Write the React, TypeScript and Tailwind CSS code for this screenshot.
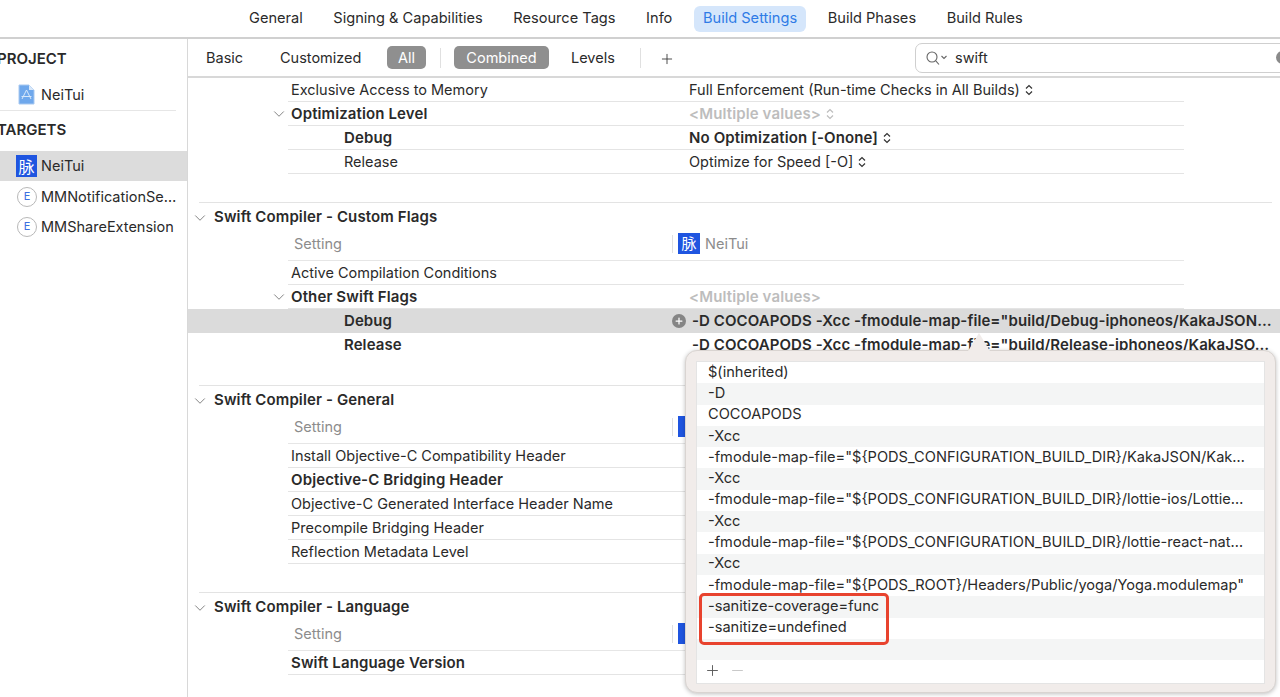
import React from 'react';
import { ChevronDown, Plus, Minus } from 'lucide-react';

const tabs = ['General', 'Signing & Capabilities', 'Resource Tags', 'Info', 'Build Settings', 'Build Phases', 'Build Rules'];

const flagItems = [
  '$(inherited)',
  '-D',
  'COCOAPODS',
  '-Xcc',
  '-fmodule-map-file="${PODS_CONFIGURATION_BUILD_DIR}/KakaJSON/Kak…',
  '-Xcc',
  '-fmodule-map-file="${PODS_CONFIGURATION_BUILD_DIR}/lottie-ios/Lottie…',
  '-Xcc',
  '-fmodule-map-file="${PODS_CONFIGURATION_BUILD_DIR}/lottie-react-nat…',
  '-Xcc',
  '-fmodule-map-file="${PODS_ROOT}/Headers/Public/yoga/Yoga.modulemap"',
  '-sanitize-coverage=func',
  '-sanitize=undefined',
  '',
];

const Stepper = ({ light = false }: { light?: boolean }) => (
  <svg width="8" height="12" viewBox="0 0 8 12" fill="none" stroke={light ? '#bdbdbd' : '#333'} strokeWidth="1.2" className="ml-[5px] shrink-0">
    <path d="M1 4.5 4 1.5 7 4.5M1 7.5 4 10.5 7 7.5" />
  </svg>
);

const AppIcon = ({ className }: { className: string }) => (
  <div className={`flex items-center justify-center bg-[#1f55e0] font-['Noto_Sans_CJK_SC',sans-serif] text-white ${className}`}>脉</div>
);

const ExtIcon = () => (
  <div className="flex h-[20px] w-[20px] items-center justify-center rounded-full border-[1.5px] border-[#b8b8b8] bg-white text-[11px] text-[#3b6fe0]">E</div>
);

type RowProps = {
  label: string;
  value?: string;
  bold?: boolean;
  boldValue?: boolean;
  indent?: boolean;
  chevron?: boolean;
  stepper?: boolean;
  muted?: boolean;
};

const strong = 'text-[15px] font-semibold tracking-[0.12px]';

const Row = ({ label, value, bold, boldValue, indent, chevron, stepper, muted }: RowProps) => (
  <div className="flex h-[24px]">
    <div className="flex w-[100px] shrink-0 items-center justify-end">
      {chevron && <ChevronDown size={18} strokeWidth={1.2} className="text-[#777]" />}
    </div>
    <div className="flex h-full w-[896px] shrink-0 items-center border-b border-[#e4e4e4] pt-[1px]">
      <div className={`flex h-full w-[401px] shrink-0 items-center ${indent ? 'pl-[56px]' : 'pl-[3px]'} ${bold ? strong : ''}`}>{label}</div>
      {value && (
        <div className={`flex items-center whitespace-nowrap ${boldValue ? strong : ''} ${muted ? 'text-[#bdbdbd]' : ''}`}>
          {value}
          {stepper && <Stepper light={muted} />}
        </div>
      )}
    </div>
  </div>
);

const FlagRow = ({ label, selected }: { label: string; selected?: boolean }) => (
  <div className={`flex h-[24px] text-[15px] font-semibold tracking-[0.08px] ${selected ? 'bg-[#dbdbdb]' : ''}`}>
    <div className="w-[156px] shrink-0" />
    <div className="relative flex h-full w-[348px] shrink-0 items-center pt-[1px]">
      {label}
      {selected && (
        <div className="absolute right-[6px] top-[5px] flex h-[14px] w-[14px] items-center justify-center rounded-full bg-[#858585]">
          <Plus size={10} strokeWidth={3} className="text-white" />
        </div>
      )}
    </div>
    <div className="flex items-center whitespace-nowrap">
      {label === 'Debug'
        ? '-D COCOAPODS -Xcc -fmodule-map-file="build/Debug-iphoneos/KakaJSON…'
        : '-D COCOAPODS -Xcc -fmodule-map-file="build/Release-iphoneos/KakaJSO…'}
    </div>
  </div>
);

const SectionHead = ({ title }: { title: string }) => (
  <div className={`ml-[11px] flex h-[29px] w-[1073px] items-center border-t border-[#e3e3e3] pt-[1px] ${strong}`}>
    <ChevronDown size={18} strokeWidth={1.2} className="ml-[-8px] mr-[5px] shrink-0 text-[#777]" />
    {title}
  </div>
);

// the popover hides the target column on the lower sections, only a sliver of the icon shows
const SettingRow = ({ covered }: { covered?: boolean }) => (
  <div className="ml-[100px] flex h-[30px] w-[896px] items-start border-b border-[#e6e6e6] pt-[2px] text-[#8c8c8c]">
    <div className="w-[384px] shrink-0 pl-[6px] leading-[22px]">Setting</div>
    <div className="mt-[2px] h-[18px] w-px bg-[#e0e0e0]" />
    {covered ? (
      <div className="ml-[5px] h-[21px] w-[22px] bg-[#1f55e0]" />
    ) : (
      <>
        <AppIcon className="ml-[5px] h-[21px] w-[22px] text-[15px]" />
        <span className="ml-[5px] leading-[22px]">NeiTui</span>
      </>
    )}
  </div>
);

export default function App() {
  return (
    <div className="relative flex h-[697px] w-[1280px] flex-col overflow-hidden bg-white font-['Inter',sans-serif] text-[14.5px] text-[#2a2a2a]">
      {/* tab bar */}
      <div className="flex h-[39px] shrink-0 items-start gap-[30.6px] border-b-2 border-[#d0d0d0] pl-[249px] pt-[6px] text-[14.6px]">
        {tabs.map((tab) =>
          tab === 'Build Settings' ? (
            <div key={tab} className="-mx-[9px] flex h-[26px] items-center rounded-[6px] bg-[#d5e6fb] px-[9px] text-[#2f7be6]">
              {tab}
            </div>
          ) : (
            <div key={tab} className="flex h-[26px] items-center">
              {tab}
            </div>
          )
        )}
      </div>

      <div className="flex min-h-0 flex-1">
        {/* sidebar */}
        <div className="w-[188px] shrink-0 border-r border-[#d8d8d8]">
          <div className="-ml-[3px] flex h-[38px] items-center pt-[2px] text-[15px] font-semibold">PROJECT</div>
          <div className="flex h-[33px] items-center pl-[18px] pt-[2px]">
            <svg width="17" height="21" viewBox="0 0 17 21" className="shrink-0">
              <path d="M1 1h10l5 5v14H1z" fill="#6fa8ec" stroke="#a9c9f0" />
              <path d="M11 1v5h5z" fill="#d8e8fa" />
              <path d="M8.5 6 4 15M8.5 6 13 15M3.5 12.5h10" stroke="#d8e8fa" strokeWidth="1" fill="none" />
            </svg>
            <span className="ml-[6px]">NeiTui</span>
          </div>
          <div className="h-px w-[176px] bg-[#e6e6e6]" />
          <div className="-ml-[3px] flex h-[40px] items-center pb-[1px] text-[15px] font-semibold">TARGETS</div>
          <div className="flex h-[30px] items-center bg-[#dcdcdc] pl-[16px]">
            <AppIcon className="h-[22px] w-[21px] text-[16px]" />
            <span className="ml-[4px]">NeiTui</span>
          </div>
          <div className="flex h-[30px] items-center pl-[17px] pt-[1px]">
            <ExtIcon />
            <span className="ml-[4px]">MMNotificationSe…</span>
          </div>
          <div className="flex h-[30px] items-center pl-[17px] pt-[1px]">
            <ExtIcon />
            <span className="ml-[4px]">MMShareExtension</span>
          </div>
        </div>

        {/* main panel */}
        <div className="flex min-w-0 flex-1 flex-col">
          <div className="flex h-[39px] shrink-0 items-center border-b-2 border-[#d8d8d8] pl-[18px]">
            <span className="w-[74px] shrink-0">Basic</span>
            <span className="w-[107px] shrink-0">Customized</span>
            <span className="flex h-[23px] w-[39px] shrink-0 items-center justify-center rounded-[5px] bg-[#8f8f8f] text-white">All</span>
            <span className="ml-[14px] h-[20px] w-px shrink-0 bg-[#e0e0e0]" />
            <span className="ml-[13px] flex h-[23px] w-[95px] shrink-0 items-center justify-center rounded-[5px] bg-[#8f8f8f] text-white">Combined</span>
            <span className="ml-[22px] w-[69px] shrink-0">Levels</span>
            <span className="h-[20px] w-px shrink-0 bg-[#e0e0e0]" />
            <Plus size={16} strokeWidth={1.3} className="ml-[18px] mt-[3px] shrink-0 text-[#333]" />
            <div className="ml-[240px] flex h-[30px] w-[400px] shrink-0 items-center rounded-[7px] border border-[#cfcfcf] pl-[9px]">
              <svg width="22" height="16" viewBox="0 0 22 16" fill="none" stroke="#666" strokeWidth="1.1" className="shrink-0">
                <circle cx="7" cy="7" r="5" />
                <path d="M10.8 10.8 14 14.5M16.5 6l2.5 2.5L21.5 6" />
              </svg>
              <span className="ml-[8px]">swift</span>
              <span className="ml-auto mr-[25px] h-[13px] w-[13px] shrink-0 rounded-full bg-[#8a8a8a]" />
            </div>
          </div>

          <div className="min-h-0 flex-1 overflow-hidden">
            <Row label="Exclusive Access to Memory" value="Full Enforcement (Run-time Checks in All Builds)" stepper />
            <Row label="Optimization Level" bold chevron value="<Multiple values>" muted boldValue stepper />
            <Row label="Debug" bold indent value="No Optimization [-Onone]" boldValue stepper />
            <Row label="Release" indent value="Optimize for Speed [-O]" stepper />
            <div className="h-[28px]" />

            <SectionHead title="Swift Compiler - Custom Flags" />
            <SettingRow />
            <Row label="Active Compilation Conditions" />
            <Row label="Other Swift Flags" bold chevron value="<Multiple values>" muted boldValue />
            <FlagRow label="Debug" selected />
            <FlagRow label="Release" />
            <div className="h-[28px]" />

            <SectionHead title="Swift Compiler - General" />
            <SettingRow covered />
            <Row label="Install Objective-C Compatibility Header" />
            <Row label="Objective-C Bridging Header" bold />
            <Row label="Objective-C Generated Interface Header Name" />
            <Row label="Precompile Bridging Header" />
            <Row label="Reflection Metadata Level" />
            <div className="h-[28px]" />

            <SectionHead title="Swift Compiler - Language" />
            <SettingRow covered />
            <Row label="Swift Language Version" bold />
          </div>
        </div>
      </div>

      {/* flags popover */}
      <div className="absolute left-[685px] top-[350px] h-[343px] w-[591px] rounded-[12px] border border-[#d9d4d1] bg-[#f1ecea] pl-[10px] pt-[10px] text-[14.6px] shadow-[0_1px_4px_rgba(0,0,0,0.25)]">
        <div className="absolute left-[282px] top-[-18px] h-0 w-0 border-x-[11px] border-b-[18px] border-x-transparent border-b-[#f1ecea]" />
        <div className="w-[569px] border border-[#e4e4e4] bg-white">
          {flagItems.map((item, i) => (
            <div key={i} className={`flex h-[21.3px] items-center whitespace-nowrap pl-[11px] ${i % 2 === 1 ? 'bg-[#f4f5f5]' : 'bg-white'}`}>
              {item}
            </div>
          ))}
          <div className="flex h-[23px] items-center gap-[8px] pb-[2px] pl-[7px]">
            <Plus size={17} strokeWidth={1.3} className="text-[#555]" />
            <Minus size={17} strokeWidth={1.3} className="text-[#c4c4c4]" />
          </div>
        </div>
      </div>

      {/* red annotation */}
      <div className="absolute left-[699px] top-[593px] h-[52px] w-[190px] rounded-[5px] border-[3px] border-[#e8432e]" />
    </div>
  );
}
